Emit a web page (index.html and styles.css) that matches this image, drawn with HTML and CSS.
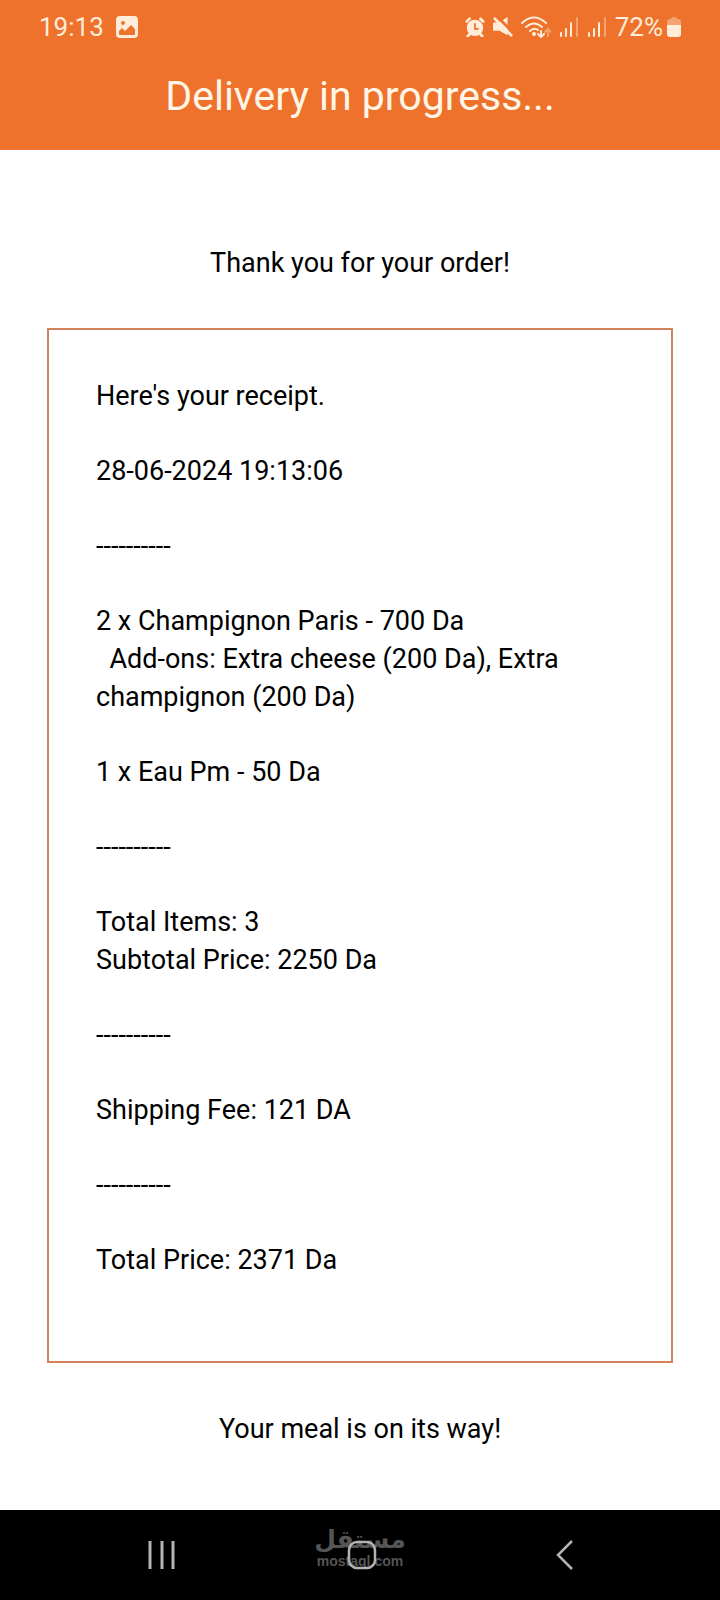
FILE: index.html
```html
<!DOCTYPE html>
<html lang="en">
<head>
    <meta charset="UTF-8">
    <meta name="viewport" content="width=device-width, initial-scale=1.0">
    <title>Delivery in progress...</title>
    <link rel="stylesheet" href="styles.css">
</head>
<body>
    <header class="header">
        <div class="status-bar">
            <div class="status-left">
                <span>19:13</span>
                <svg width="22" height="22" viewBox="0 0 22 22">
                    <path fill="currentColor" fill-rule="evenodd" d="M4 0h14a4 4 0 0 1 4 4v14a4 4 0 0 1-4 4H4a4 4 0 0 1-4-4V4a4 4 0 0 1 4-4zM3 15v3q0 1 1 1h14q1 0 1-1v-5l-4-4-6 6-3-3zM7 5a2 2 0 1 0 0 4 2 2 0 0 0 0-4z"/>
                </svg>
            </div>
            <div class="status-right">
                <svg width="20" height="20" viewBox="0 0 22 22" fill="none" stroke="currentColor">
                    <circle cx="11" cy="12" r="9" fill="currentColor" stroke="none"/>
                    <path stroke-width="3" stroke-linecap="round" d="M2 5l3-3M20 5l-3-3M5 19l-2 2M17 19l2 2"/>
                    <path class="cutout" stroke-width="2" d="M11 7v6h4"/>
                </svg>
                <svg width="20" height="20" viewBox="0 0 22 22">
                    <path fill="currentColor" d="M1 6h6l9-6v20l-9-5H1q-1 0-1-1V7q0-1 1-1z"/>
                    <path class="cutout" stroke-width="3" d="M4-1l20 20"/>
                    <path stroke="currentColor" stroke-width="3" stroke-linecap="round" d="M2 2l18 18"/>
                </svg>
                <svg width="30" height="22" viewBox="0 0 30 22" fill="none" stroke="currentColor" stroke-width="2" stroke-linecap="round">
                    <path d="M1 7q12-11 24 0M5 11q8-7 16 0M9 15q4-4 8-1"/>
                    <circle cx="13" cy="18" r="2" fill="currentColor" stroke="none"/>
                    <path d="M20 15v6M17 18l3 3 3-3"/>
                    <path opacity=".4" d="M27 20v-7M24 16l3-3 3 3"/>
                </svg>
                <svg width="20" height="20" viewBox="0 0 20 20" stroke="currentColor" stroke-width="2" stroke-linecap="round">
                    <path d="M2 16v3M7 12v7M12 6v13"/>
                    <path opacity=".4" d="M18 1v18"/>
                </svg>
                <svg width="20" height="20" viewBox="0 0 20 20" stroke="currentColor" stroke-width="2" stroke-linecap="round">
                    <path d="M2 16v3M7 12v7M12 6v13"/>
                    <path opacity=".4" d="M18 1v18"/>
                </svg>
                <div class="battery">
                    <span>72%</span>
                    <svg width="14" height="20" viewBox="0 0 14 20" fill="currentColor">
                        <path opacity=".4" d="M0 8V5q0-3 3-3h1q0-2 2-2h2q2 0 2 2h1q3 0 3 3v3z"/>
                        <path d="M0 8h14v9q0 3-3 3H3q-3 0-3-3z"/>
                    </svg>
                </div>
            </div>
        </div>
        <h1>Delivery in progress...</h1>
    </header>

    <main class="content">
        <p class="message">Thank you for your order!</p>

        <section class="receipt">
            <p>Here's your receipt.</p>
            <p>28-06-2024 19:13:06</p>
            <p>----------</p>
            <p>2 x Champignon Paris - 700 Da
  Add-ons: Extra cheese (200 Da), Extra champignon (200 Da)</p>
            <p>1 x Eau Pm - 50 Da</p>
            <p>----------</p>
            <p>Total Items: 3
Subtotal Price: 2250 Da</p>
            <p>----------</p>
            <p>Shipping Fee: 121 DA</p>
            <p>----------</p>
            <p>Total Price: 2371 Da</p>
        </section>

        <p class="message">Your meal is on its way!</p>
    </main>

    <nav class="nav-bar">
        <div class="watermark">
            <span class="watermark-name" lang="ar" dir="rtl">مستقل</span>
            <span class="watermark-site">mostaql.com</span>
        </div>
        <button type="button" aria-label="Recent apps">
            <svg width="30" height="30" viewBox="0 0 30 30" fill="none" stroke="currentColor" stroke-width="3">
                <path d="M4 1v28M16 1v28M27 1v28"/>
            </svg>
        </button>
        <button type="button" aria-label="Home">
            <svg width="30" height="30" viewBox="0 0 30 30" fill="none" stroke="currentColor" stroke-width="2.5">
                <rect x="2" y="2" width="26" height="26" rx="8"/>
            </svg>
        </button>
        <button type="button" aria-label="Back">
            <svg width="30" height="30" viewBox="0 0 30 30" fill="none" stroke="currentColor" stroke-width="2.5">
                <path d="M24 1L10 15l14 14"/>
            </svg>
        </button>
    </nav>
</body>
</html>
```
FILE: styles.css
```css
* {
    box-sizing: border-box;
}

body {
    font-family: Roboto, "Noto Sans", sans-serif;
    font-size: 27px;
    line-height: 38px;
    margin: 0;
    background-color: #fff;
    color: #000;
    display: flex;
    flex-direction: column;
    min-height: 100vh;
}

h1, p {
    margin: 0;
}

svg {
    display: block;
    flex-shrink: 0;
}

.header {
    background-color: #ee722c;
    color: #fff6e8;
    padding-bottom: 30px;
}

.status-bar {
    display: flex;
    justify-content: space-between;
    align-items: center;
    height: 54px;
    padding: 0 39px;
    color: #ffecd9;
    font-size: 26px;
}

.status-left {
    display: flex;
    align-items: center;
    gap: 12px;
}

.status-right {
    display: flex;
    align-items: center;
    gap: 8px;
}

.battery {
    display: flex;
    align-items: center;
    gap: 4px;
}

/* gaps cut into the solid icons */
.cutout {
    stroke: #ee722c;
}

h1 {
    font-size: 41px;
    font-weight: 400;
    line-height: 48px;
    padding-top: 18px;
    text-align: center;
}

.content {
    flex: 1;
    display: flex;
    flex-direction: column;
    padding: 94px 47px 60px;
}

.message {
    text-align: center;
}

.receipt {
    display: flex;
    flex-direction: column;
    gap: 37px;
    margin: 46px 0 47px;
    padding: 47px 47px 82px;
    border: 2px solid #d0835a;
}

.receipt p {
    white-space: pre-wrap;
}

.nav-bar {
    position: relative;
    display: grid;
    grid-template-columns: repeat(3, 1fr);
    height: 90px;
    padding: 0 56px 0 60px;
    background-color: #000;
}

.nav-bar button {
    display: flex;
    justify-content: center;
    align-items: center;
    padding: 0;
    border: none;
    background: none;
    color: #b4b4b4;
    cursor: pointer;
    z-index: 1;
}

.watermark {
    position: absolute;
    top: 17px;
    left: 0;
    right: 0;
    display: flex;
    flex-direction: column;
    align-items: center;
    color: #555;
    font-weight: bold;
}

.watermark-name {
    font-family: "DejaVu Sans", sans-serif;
    font-size: 25px;
    line-height: 26px;
}

.watermark-site {
    font-family: "Liberation Sans", Arial, sans-serif;
    font-size: 14px;
    line-height: 16px;
}
```
